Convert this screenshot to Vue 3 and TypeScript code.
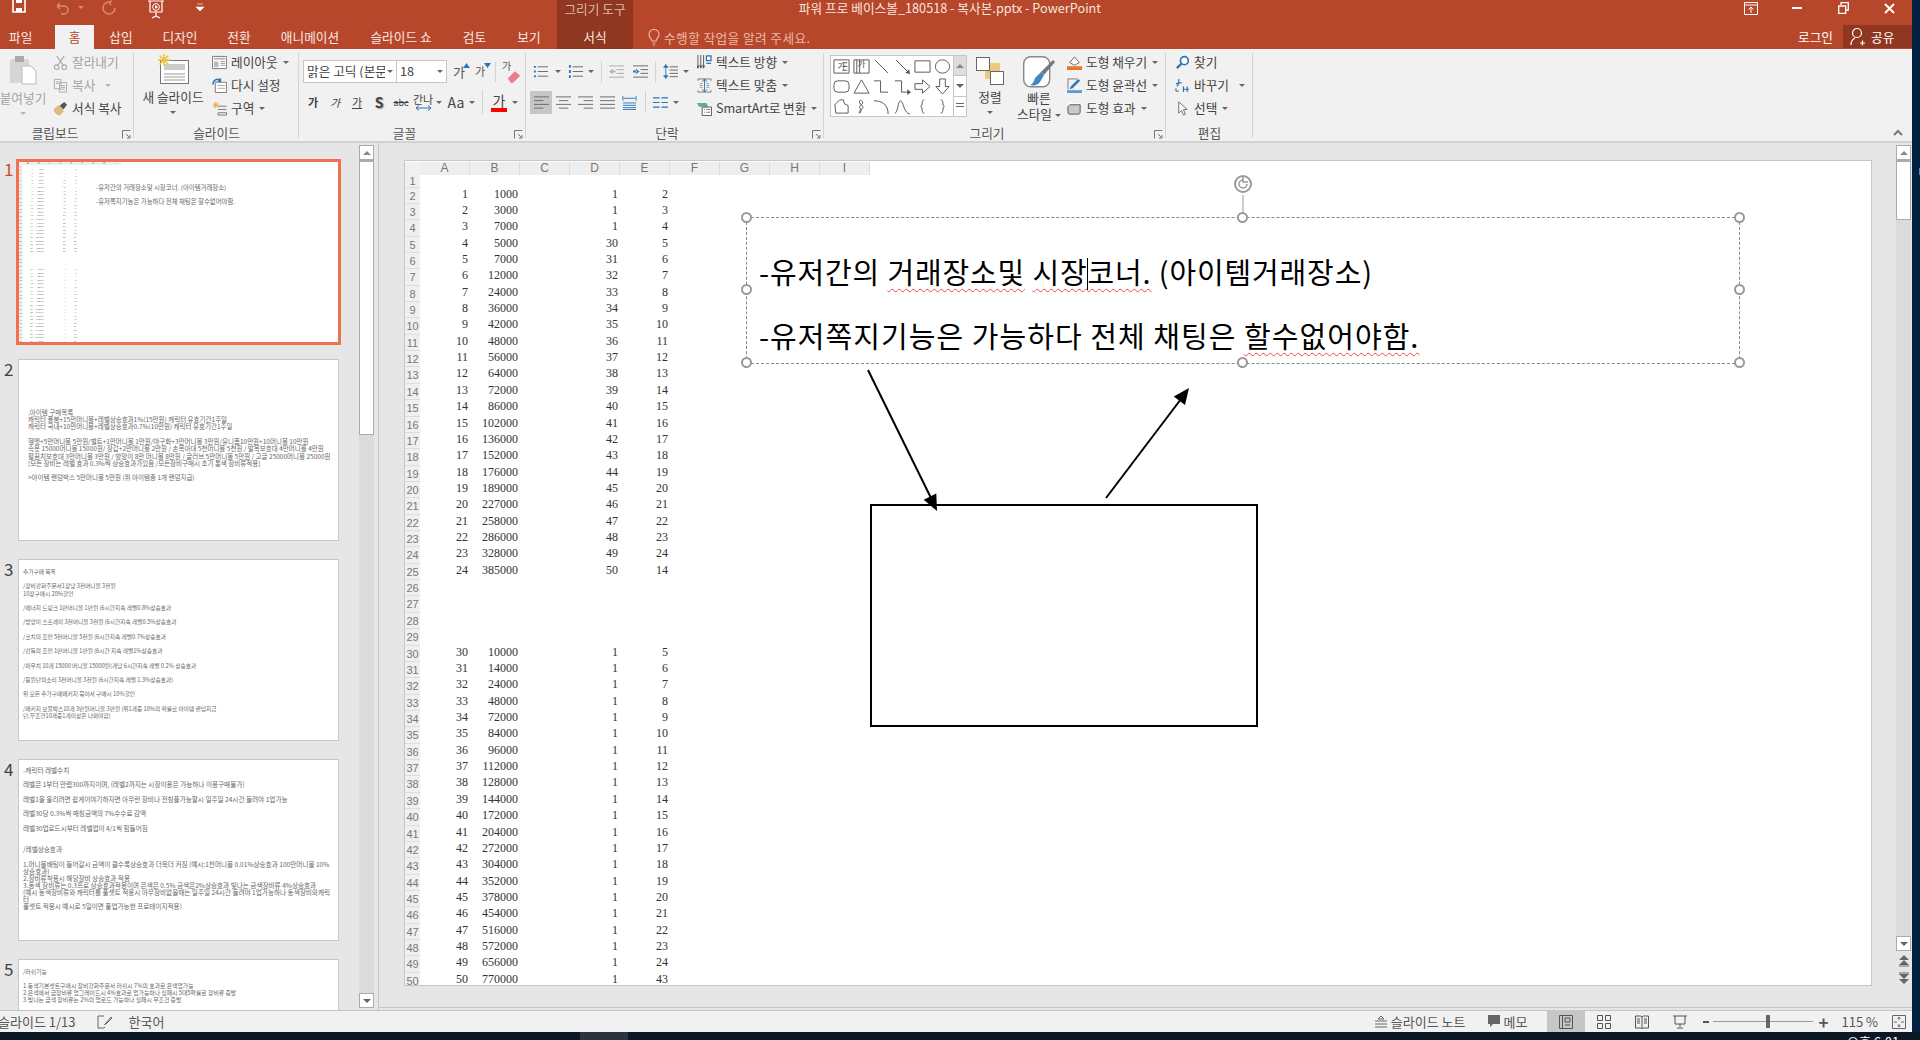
<template>
  <div class="screen">
    <div class="desktop-row">
      <div class="window">
        <!-- title bar -->
        <header class="titlebar">
          <div class="title-row">
            <div class="qat">
              <svg class="qat-save" width="14" height="14" viewBox="0 0 14 14"><path d="M1 -3h12v15H1z" fill="none" stroke="#fff" stroke-width="1.6" /><path d="M4 -2h6v5H4zM4 8h6v4H4z" fill="#fff" /></svg>
              <svg class="qat-undo" width="16" height="16" viewBox="0 0 16 16"><path d="M3 6h7a4 4 0 0 1 0 8H7M3 6l3-3M3 6l3 3" fill="none" stroke="#d98a72" stroke-width="1.5" /></svg>
              <span class="caret pale qat-caret"></span>
              <svg class="qat-redo" width="16" height="16" viewBox="0 0 16 16"><path d="M8 2a6 6 0 1 0 6 6M8 2l3-1M8 2l2 3" fill="none" stroke="#d98a72" stroke-width="1.5" /></svg>
              <svg class="qat-show" width="18" height="20" viewBox="0 0 18 20"><path d="M1 1h16M3 1v11h12V1M9 12v4M5 18l4-2 4 2" fill="none" stroke="#fff" stroke-width="1.2" /><circle cx="9" cy="7" r="3.4" fill="none" stroke="#fff" /><path d="M8 5l3 2-3 2z" fill="#fff" /></svg>
              <svg class="qat-more" width="8" height="10" viewBox="0 0 8 10"><path d="M1 1h6M0 4h8l-4 4z" fill="#fff" stroke="#fff" stroke-width=".6" /></svg>
            </div>
            <div class="tools-label">그리기 도구</div>
            <div class="doc-title">파워 프로 베이스볼_180518 - 복사본.pptx - PowerPoint</div>
            <div class="win-btns">
              <span class="win-btn"><svg width="14" height="13" viewBox="0 0 14 13"><path d="M.5.5h13v12H.5zM.5 3h13M7 11V5M4.5 7.5L7 5l2.5 2.5" fill="none" stroke="#fff" /></svg></span>
              <span class="win-btn"><svg width="10" height="10" viewBox="0 0 10 10"><path d="M0 5h10" stroke="#fff" stroke-width="2" /></svg></span>
              <span class="win-btn"><svg width="11" height="12" viewBox="0 0 11 12"><path d="M3 3V.7h7.3V8H8M.7 4h7v7.3h-7z" fill="none" stroke="#fff" stroke-width="1.3" /></svg></span>
              <span class="win-btn"><svg width="11" height="11" viewBox="0 0 11 11"><path d="M1 1l9 9M10 1l-9 9" stroke="#fff" stroke-width="2" /></svg></span>
            </div>
          </div>
          <div class="tab-row">
            <div
              v-for="t in tabs"
              :key="t.name"
              class="tab"
              :class="{ active: t.name === '홈', tool: t.name === '서식', file: t.name === '파일' }"
              :style="{ width: t.w + 'px' }"
            >{{ t.name }}</div>
            <div class="tell-me">
              <svg width="12" height="17" viewBox="0 0 12 17"><path d="M4 12c0-2-3-3-3-6.500a5 5 0 0 1 10 0C11 9 8 10 8 12zM4.500 14h3M5 16h2" fill="none" stroke="#eab9a8" stroke-width="1.100" /></svg>
              <span>수행할 작업을 알려 주세요.</span>
            </div>
            <div class="login">로그인</div>
            <div class="share">
              <svg width="16" height="19" viewBox="0 0 16 19"><circle cx="7" cy="6" r="4.500" fill="none" stroke="#fff" stroke-width="1.200" /><path d="M1 18c0-4 2-6 4-7M10 16h5M12.500 13.500v5" fill="none" stroke="#fff" stroke-width="1.200" /></svg>
              <span>공유</span>
            </div>
          </div>
        </header>

        <!-- ribbon -->
        <section class="ribbon">
          <div class="group g-clip">
            <div class="group-body">
              <div class="big-btn paste disabled">
                <svg width="30" height="30" viewBox="0 0 30 30"><rect x="2" y="4" width="19" height="24" rx="1.500" fill="#d9d5d5" /><rect x="7" y="1" width="9" height="6" fill="#aaa" /><path d="M14 11h9l5 5v13H14z" fill="#fff" stroke="#bbb" /></svg>
                <span class="big-label">붙여넣기</span>
                <span class="caret pale-gray"></span>
              </div>
              <div class="small-col">
                <div class="small-btn disabled"><svg class="ic" viewBox="0 0 16 16"><path d="M4 1l7 10M12 1L5 11" stroke="#aaa" fill="none" stroke-width="1.200" /><circle cx="4" cy="13" r="2.500" fill="none" stroke="#aaa" stroke-width="1.200" /><circle cx="12" cy="13" r="2.500" fill="none" stroke="#aaa" stroke-width="1.200" /></svg>잘라내기</div>
                <div class="small-btn disabled"><svg class="ic" viewBox="0 0 16 16"><path d="M1.500 1.500h7v10h-7zM7 5h7.500v10H7zM3 4h4M3 6h3M9 8h4M9 10h4M9 12h4" fill="#f4f4f4" stroke="#aaa" /></svg>복사<span class="caret pale-gray far"></span></div>
                <div class="small-btn"><svg class="ic" viewBox="0 0 16 16"><path d="M1 9l5-4 5 6-4 4-4-2z" fill="#e2bb78" stroke="#c39a55" stroke-width=".6" /><path d="M7 5l5-4 3 3-4 5z" fill="#555" /></svg>서식 복사</div>
              </div>
            </div>
            <div class="group-label">클립보드</div>
            <svg class="launcher" width="9" height="9" viewBox="0 0 9 9"><path d="M.5 8.500v-8h8M4 4l4 4M5 8h3V5" fill="none" stroke="#777" /></svg>
          </div>

          <div class="group g-slide">
            <div class="group-body">
              <div class="big-btn new-slide">
                <svg width="32" height="30" viewBox="0 0 32 30"><rect x="3.500" y="6.500" width="28" height="23" fill="#fff" stroke="#777" /><rect x="7" y="10" width="21" height="6" fill="#ccc" /><path d="M7 20h21M7 23h21M7 26h21" stroke="#999" /><path d="M7 0v12M1 6h12M2.500 1.500l9 9M11.500 1.500l-9 9" stroke="#f0c040" stroke-width="1.500" /></svg>
                <span class="big-label">새 슬라이드</span>
                <span class="caret"></span>
              </div>
              <div class="small-col">
                <div class="small-btn"><svg class="ic" viewBox="0 0 16 16"><path d="M.5 1.500h15v13H.5z" fill="#fff" stroke="#777" /><path d="M2 3h12v2H2zM2 7h5v6H2z" fill="#bbb" /><path d="M9 7h5M9 9h5M9 11h5" stroke="#999" /></svg>레이아웃<span class="caret"></span></div>
                <div class="small-btn"><svg class="ic" viewBox="0 0 16 16"><path d="M3.500 4.500h12v11h-12z" fill="#fff" stroke="#777" /><path d="M6 8h8M6 11h8" stroke="#aaa" /><path d="M1 7a5 5 0 0 1 8-4.500M9 .5v3H6" fill="none" stroke="#2e75b6" stroke-width="1.600" /></svg>다시 설정</div>
                <div class="small-btn"><svg class="ic" viewBox="0 0 16 16"><path d="M6.500 5.500h9M6.500 9h9M6.500 12.500h9V15h-9z" fill="none" stroke="#777" /><path d="M4 1v7M.5 4.500h7M1.500 2l5 5M6.500 2l-5 5" stroke="#eaa12f" /></svg>구역<span class="caret"></span></div>
              </div>
            </div>
            <div class="group-label">슬라이드</div>
          </div>

          <div class="group g-font">
            <div class="font-rows">
              <div class="font-row first">
                <div class="combo name"><span class="combo-text">맑은 고딕 (본문)</span><span class="caret"></span></div>
                <div class="combo size"><span class="combo-text">18</span><span class="caret"></span></div>
                <div class="grow"><span class="glyph big">가</span><svg width="7" height="5" viewBox="0 0 7 5"><path d="M3.500 0L7 5H0z" fill="#2e75b6" /></svg></div>
                <div class="grow small"><span class="glyph">가</span><svg width="7" height="5" viewBox="0 0 7 5"><path d="M3.500 5L7 0H0z" fill="#2e75b6" /></svg></div>
                <span class="vsep"></span>
                <div class="eraser"><span class="glyph tiny">가</span><svg width="14" height="13" viewBox="0 0 16 14"><path d="M1 9l8-8 6 5-8 8H4z" fill="#e87d8e" /></svg></div>
              </div>
              <div class="font-row second">
                <span class="fmt bold">가</span>
                <span class="fmt italic">가</span>
                <span class="fmt under">가</span>
                <span class="fmt shadow">S</span>
                <span class="fmt strike">abc</span>
                <span class="fmt spacing">간나<svg width="17" height="6" viewBox="0 0 17 6"><path d="M1 3h15M4 .5L1 3l3 2.500M13 .5L16 3l-3 2.500" fill="none" stroke="#2e75b6" /></svg></span>
                <span class="caret near"></span>
                <span class="fmt aa">Aa</span>
                <span class="caret near"></span>
                <span class="vsep tall"></span>
                <span class="fmt color">가<i class="red-bar"></i></span>
                <span class="caret"></span>
              </div>
            </div>
            <div class="group-label">글꼴</div>
            <svg class="launcher" width="9" height="9" viewBox="0 0 9 9"><path d="M.5 8.500v-8h8M4 4l4 4M5 8h3V5" fill="none" stroke="#777" /></svg>
          </div>

          <div class="group g-para">
            <div class="group-body">
              <div class="para-left">
                <div class="para-row top">
                  <svg class="ic wide" viewBox="0 0 16 16"><path d="M5 3h11M5 8h11M5 13h11" stroke="#666" /><path d="M1 2h2v2H1zM1 7h2v2H1zM1 12h2v2H1z" fill="#2e75b6" /></svg><span class="caret c8"></span>
                  <svg class="ic wide gap" viewBox="0 0 16 16"><path d="M5 3h11M5 8h11M5 13h11" stroke="#666" /><path d="M1 1h2v3H1zM1 6.500h2v3H1zM1 12h2v3H1z" fill="#2e75b6" /></svg><span class="caret"></span>
                  <span class="vsep mid"></span>
                  <svg class="ic wide" viewBox="0 0 16 16"><path d="M0 2h16M8 6h8M8 10h8M0 14h16" stroke="#aaa" /><path d="M0 8l4-3v6zM3 7h4v2H3z" fill="#9db7cd" /></svg>
                  <svg class="ic wide gap2" viewBox="0 0 16 16"><path d="M0 2h16M8 6h8M8 10h8M0 14h16" stroke="#666" /><path d="M7 8L3 5v6zM0 7h4v2H0z" fill="#2e75b6" /></svg>
                  <span class="vsep mid"></span>
                  <svg class="ic wide" viewBox="0 0 16 16"><path d="M7 3h9M7 6.500h9M7 10h9M7 13.500h9" stroke="#666" /><path d="M3 0l3 4H0zM3 16l3-4H0zM2.500 4h1v8h-1z" fill="#2e75b6" /></svg><span class="caret"></span>
                </div>
                <div class="para-row bottom">
                  <span class="align on"><svg class="ic" viewBox="0 0 16 16"><path d="M0 2h16M0 6h10M0 10h16M0 14h10" stroke="#666" /></svg></span>
                  <span class="align"><svg class="ic" viewBox="0 0 16 16"><path d="M0 2h16M3 6h10M0 10h16M3 14h10" stroke="#666" /></svg></span>
                  <span class="align"><svg class="ic" viewBox="0 0 16 16"><path d="M0 2h16M6 6h10M0 10h16M6 14h10" stroke="#666" /></svg></span>
                  <span class="align"><svg class="ic" viewBox="0 0 16 16"><path d="M0 2h16M0 6h16M0 10h16M0 14h16" stroke="#666" /></svg></span>
                  <span class="align"><svg class="ic" viewBox="0 0 16 16"><path d="M1 1v5M15 1v5M2 3.500h12M1 8.500h14M1 11h14M1 13.500h14M1 15.500h14" stroke="#2e75b6" /></svg></span>
                  <span class="vsep mid before-cols"></span>
                  <svg class="ic wide" viewBox="0 0 16 16"><path d="M0 3h7M9 3h7M0 8h7M9 8h7M0 13h7M9 13h7" stroke="#2e75b6" stroke-width="1.300" /></svg><span class="caret"></span>
                </div>
              </div>
              <div class="small-col para-small">
                <div class="small-btn"><svg class="ic" viewBox="0 0 16 16"><path d="M1 0v14M4 0v14M7 0v14M0 11l1 3 1-3M3 11l1 3 1-3M6 11l1 3 1-3" fill="none" stroke="#555" /><path d="M10 1h5v5h-5zM10 9h5" fill="none" stroke="#2e75b6" stroke-width="1.300" /></svg>텍스트 방향<span class="caret"></span></div>
                <div class="small-btn"><svg class="ic" viewBox="0 0 16 16"><path d="M1 3V1h14v2M1 13v2h14v-2" fill="none" stroke="#777" /><path d="M8 1v14M5.500 4L8 1l2.500 3M5.500 12L8 15l2.500-3" fill="none" stroke="#2e75b6" /><path d="M3 6h3M3 8h3M3 10h3M10 6h3M10 8h3M10 10h3" stroke="#999" /></svg>텍스트 맞춤<span class="caret"></span></div>
                <div class="small-btn smart"><svg class="ic" viewBox="0 0 16 16"><path d="M0 2h10l2 4H2z" fill="#5fae8f" /><path d="M5.500 6.500h10v9h-10z" fill="#fff" stroke="#555" /><path d="M7.500 9h1M7.500 12h1M10 9h4M10 12h4" stroke="#777" /></svg>SmartArt로 변환<span class="caret"></span></div>
              </div>
            </div>
            <div class="group-label">단락</div>
            <svg class="launcher" width="9" height="9" viewBox="0 0 9 9"><path d="M.5 8.500v-8h8M4 4l4 4M5 8h3V5" fill="none" stroke="#777" /></svg>
          </div>

          <div class="group g-draw">
            <div class="group-body">
              <div class="gallery">
                <div class="gallery-grid">
                  <svg v-for="(s, i) in shapes" :key="i" class="shape" viewBox="0 0 18 18">
                    <path :d="s.d" fill="none" stroke="#555" />
                    <path v-if="s.head" :d="s.head" fill="#555" />
                    <text v-if="s.t" x="9" :y="s.ty" class="shape-text" text-anchor="middle">{{ s.t }}</text>
                  </svg>
                </div>
                <div class="gallery-scroll">
                  <span class="gs-btn off"><i class="tri up"></i></span>
                  <span class="gs-btn"><i class="tri down"></i></span>
                  <span class="gs-btn"><i class="tri-more"></i></span>
                </div>
              </div>
              <div class="big-btn arrange">
                <svg width="28" height="28" viewBox="0 0 28 28"><rect x="9" y="6" width="15" height="16" fill="#edc87e" /><rect x=".5" y=".5" width="13" height="13" fill="#fff" stroke="#666" /><rect x="14.500" y="14.500" width="13" height="13" fill="#fff" stroke="#666" /></svg>
                <span class="big-label">정렬</span>
                <span class="caret"></span>
              </div>
              <div class="big-btn quick">
                <svg width="32" height="32" viewBox="0 0 32 32"><rect x=".7" y=".7" width="26" height="30" rx="7" fill="#fff" stroke="#888" stroke-width="1.400" /><path d="M18 16L30 4l2 2-11 13z" fill="#777" /><path d="M12 22l6-6 3 3-4 7c-2 3-6 4-10 3 3-1 4-4 5-7z" fill="#3f87c6" /></svg>
                <span class="big-label">빠른</span>
                <span class="big-label second-line">스타일<span class="caret inline"></span></span>
              </div>
              <div class="small-col shape-col">
                <div class="small-btn"><svg class="ic" viewBox="0 0 16 16"><path d="M3 8l5-6 5 6-5 3z" fill="#fff" stroke="#666" /><path d="M0 12h16v4H0z" fill="#e9772b" /></svg>도형 채우기<span class="caret"></span></div>
                <div class="small-btn"><svg class="ic" viewBox="0 0 16 16"><path d="M1 1h10M1 1v11" stroke="#777" fill="none" /><path d="M4 9l8-8 2 2-8 8-3 1z" fill="#2e75b6" /><path d="M0 13h16v3H0z" fill="#5b9bd5" /></svg>도형 윤곽선<span class="caret"></span></div>
                <div class="small-btn"><svg class="ic" viewBox="0 0 16 16"><path d="M1 12V5a3 3 0 0 1 3-3h9z" fill="#fff" /><path d="M3 4h11v8a2 2 0 0 1-2 2H3a2 2 0 0 1-2-2V6z" fill="#c9c9c9" stroke="#555" /></svg>도형 효과<span class="caret"></span></div>
              </div>
            </div>
            <div class="group-label">그리기</div>
            <svg class="launcher" width="9" height="9" viewBox="0 0 9 9"><path d="M.5 8.500v-8h8M4 4l4 4M5 8h3V5" fill="none" stroke="#777" /></svg>
          </div>

          <div class="group g-edit">
            <div class="small-col edit-col">
              <div class="small-btn"><svg class="ic" viewBox="0 0 16 16"><circle cx="10" cy="6" r="4.200" fill="#fff" stroke="#2e75b6" stroke-width="1.800" /><path d="M7 9l-5 5" stroke="#2e75b6" stroke-width="2.400" /></svg>찾기</div>
              <div class="small-btn"><svg class="ic" viewBox="0 0 16 16"><path d="M1 6l6-1M4 1v5M2 9l2-3M9 9v6M9 12h6M13 9v6" fill="none" stroke="#2e75b6" stroke-width="1.300" /><path d="M1 11v3h3" fill="none" stroke="#555" /></svg>바꾸기<span class="caret far"></span></div>
              <div class="small-btn"><svg class="ic" viewBox="0 0 16 16"><path d="M4 1v12l3-3 2 5 2-1-2-5h4z" fill="#fff" stroke="#666" /></svg>선택<span class="caret"></span></div>
            </div>
            <div class="group-label">편집</div>
          </div>
          <svg class="collapse" width="10" height="7" viewBox="0 0 10 7"><path d="M1 6l4-4 4 4" fill="none" stroke="#777" stroke-width="2" /></svg>
        </section>

        <!-- workspace -->
        <main class="workspace">
          <aside class="thumbs">
            <div class="thumb-list">
              <div class="thumb-item">
                <span class="thumb-no current">1</span>
                <div class="thumb sel">
                  <div class="mini-sheet">
                    <div class="sheet-head"><span class="corner"></span><span v-for="c in letters" :key="c" class="col-head">{{ c }}</span></div>
                    <div v-for="r in rows" :key="r.n" class="sheet-row" :class="{ firstrow: r.n === 1 }">
                      <span class="row-head">{{ r.n }}</span>
                      <span class="cell">{{ r.v[0] }}</span><span class="cell">{{ r.v[1] }}</span><span class="cell"></span>
                      <span class="cell">{{ r.v[2] }}</span><span class="cell">{{ r.v[3] }}</span>
                    </div>
                  </div>
                  <div class="mini-text">
                    <p>-유저간의 거래장소및 시장코너. (아이템거래장소)</p>
                    <p>-유저쪽지기능은 가능하다 전체 채팅은 할수없어야함.</p>
                  </div>
                </div>
              </div>
              <div v-for="t in thumbTexts" :key="t.n" class="thumb-item">
                <span class="thumb-no">{{ t.n }}</span>
                <div class="thumb" :class="'t' + t.n">
                  <p v-for="(line, i) in t.lines" :key="i">{{ line }}</p>
                </div>
              </div>
            </div>
            <div class="scrollbar left-scroll">
              <span class="sb-btn"><i class="tri up"></i></span>
              <span class="sb-thumb"></span>
              <span class="sb-track"></span>
              <span class="sb-btn"><i class="tri down"></i></span>
            </div>
          </aside>

          <div class="editor">
            <div class="slide">
              <div class="sheet">
                <div class="sheet-head"><span class="corner"></span><span v-for="c in letters" :key="c" class="col-head">{{ c }}</span></div>
                <div v-for="r in rows" :key="r.n" class="sheet-row" :class="{ firstrow: r.n === 1 }">
                  <span class="row-head">{{ r.n }}</span>
                  <span class="cell">{{ r.v[0] }}</span><span class="cell">{{ r.v[1] }}</span><span class="cell"></span>
                  <span class="cell">{{ r.v[2] }}</span><span class="cell">{{ r.v[3] }}</span>
                </div>
              </div>

              <svg class="drawing" viewBox="405 161 1466 824">
                <rect x="871" y="505" width="386" height="221" fill="#fff" stroke="#000" stroke-width="2" />
                <path d="M868 370L931 498" stroke="#000" stroke-width="2" />
                <polygon points="937,511 923.700,499.700 936.300,493.500" fill="#000" />
                <path d="M1106 498L1181 399" stroke="#000" stroke-width="2" />
                <polygon points="1189,388 1185,405 1173.800,396.600" fill="#000" />
                <path d="M1243 195v22" stroke="#999" />
                <circle cx="1243" cy="184" r="8" fill="none" stroke="#999" stroke-width="2" />
                <path d="M1243 180a4 4 0 1 0 4 4M1243 176v6h5" fill="none" stroke="#999" stroke-width="1.500" />
              </svg>

              <div class="textbox">
                <p class="tb-line">-유저간의 <span class="typo">거래장소및</span> <span class="typo">시장<i class="text-cursor"></i>코너.</span> (아이템거래장소)</p>
                <p class="tb-line second">-유저쪽지기능은 가능하다 전체 채팅은 <span class="typo">할수없어야함.</span></p>
                <span v-for="h in handles" :key="h.k" class="handle" :class="h.k"></span>
              </div>
            </div>
            <div class="scrollbar main-scroll">
              <span class="sb-btn"><i class="tri up"></i></span>
              <span class="sb-thumb"></span>
              <span class="sb-track"></span>
              <span class="sb-btn"><i class="tri down"></i></span>
              <svg class="page-arrow prev" width="10" height="12" viewBox="0 0 10 12"><path d="M5 0l5 5H0zM5 5l5 5H0z" fill="#666" /><path d="M0 11h10" stroke="#666" /></svg>
              <svg class="page-arrow next" width="10" height="12" viewBox="0 0 10 12"><path d="M0 1h10" stroke="#666" /><path d="M0 2h10L5 7zM0 7h10l-5 5z" fill="#666" /></svg>
            </div>
          </div>
        </main>

        <!-- status bar -->
        <footer class="statusbar">
          <span class="st-count">슬라이드 1/13</span>
          <svg class="st-book" width="15" height="14" viewBox="0 0 15 14"><path d="M7 1H1v12h6l1-1M9 8l5-6 1 1-6 6-1.500.5z" fill="none" stroke="#666" /></svg>
          <span class="st-lang">한국어</span>
          <div class="st-right">
            <span class="st-item"><svg width="12" height="12" viewBox="0 0 12 12"><path d="M6 0L3 3h6zM0 5h12M0 8h12M0 11h12" stroke="#666" fill="none" /></svg>슬라이드 노트</span>
            <span class="st-item memo"><svg width="12" height="13" viewBox="0 0 12 13"><path d="M0 0h12v9H5l-3 3V9H0z" fill="#666" /></svg>메모</span>
            <span class="view on"><svg width="14" height="14" viewBox="0 0 14 14"><path d="M.5.5h13v13H.5zM3.500.5v13M6 3h5v4H6zM6 10h5" fill="none" stroke="#555" /></svg></span>
            <span class="view"><svg width="14" height="14" viewBox="0 0 14 14"><path d="M.5.5h5v5h-5zM8.500.5h5v5h-5zM.5 8.500h5v5h-5zM8.500 8.500h5v5h-5z" fill="none" stroke="#555" /></svg></span>
            <span class="view"><svg width="14" height="14" viewBox="0 0 14 14"><path d="M.5 1h5l1.500 1 1.500-1h5v12h-5L7 14l-1.500-1h-5zM7 2v12M2 4h3M2 6h3M2 8h3M9 4h3M9 6h3M9 8h3" fill="none" stroke="#555" /></svg></span>
            <span class="view"><svg width="14" height="14" viewBox="0 0 14 14"><path d="M0 1h14M2 1v8h10V1M7 9v3M4 13h6" fill="none" stroke="#555" /></svg></span>
            <span class="zoom-minus"></span>
            <span class="zoom-track"><i class="zoom-knob"></i></span>
            <span class="zoom-plus">+</span>
            <span class="zoom-val">115 %</span>
            <svg class="fit" width="14" height="14" viewBox="0 0 14 14"><path d="M.5.5h13v13H.5zM7 2v3M5.500 3.500L7 2l1.500 1.500M7 12V9M5.500 10.500L7 12l1.500-1.500M2 7h3M9 7h3" fill="none" stroke="#666" /></svg>
          </div>
        </footer>
      </div>
      <div class="desk-strip"><i class="desk-dot"></i></div>
    </div>
    <div class="taskbar">
      <span class="task-active"></span>
      <span class="clock">오후 6:01</span>
    </div>
  </div>
</template>

<script setup lang="ts">
const tabs = [
  { name: '파일', w: 55 },
  { name: '홈', w: 39 },
  { name: '삽입', w: 54 },
  { name: '디자인', w: 64 },
  { name: '전환', w: 54 },
  { name: '애니메이션', w: 88 },
  { name: '슬라이드 쇼', w: 94 },
  { name: '검토', w: 53 },
  { name: '보기', w: 56 },
  { name: '서식', w: 76 },
]

const letters = ['A', 'B', 'C', 'D', 'E', 'F', 'G', 'H', 'I']

const top = [1000, 3000, 7000, 5000, 7000, 12000, 24000, 36000, 42000, 48000, 56000, 64000, 72000, 86000, 102000, 136000, 152000, 176000, 189000, 227000, 258000, 286000, 328000, 385000]
const topD = [1, 1, 1, 30, 31, 32, 33, 34, 35, 36, 37, 38, 39, 40, 41, 42, 43, 44, 45, 46, 47, 48, 49, 50]
const bottom = [10000, 14000, 24000, 48000, 72000, 84000, 96000, 112000, 128000, 144000, 172000, 204000, 272000, 304000, 352000, 378000, 454000, 516000, 572000, 656000, 770000]

const rows: { n: number; v: (number | string)[] }[] = []
for (let n = 1; n <= 50; n++) {
  if (n >= 2 && n <= 25) {
    const i = n - 2
    rows.push({ n, v: [n - 1, top[i], topD[i], n === 25 ? 14 : n] })
  } else if (n >= 30) {
    const i = n - 30
    rows.push({ n, v: [n, bottom[i], 1, n === 50 ? 43 : n - 25] })
  } else {
    rows.push({ n, v: ['', '', '', ''] })
  }
}

const shapes: { d: string; head?: string; t?: string; ty?: number }[] = [
  { d: 'M1 2h16v14H1zM10 5h5M10 9h5M10 13h5', t: '가', ty: 12 },
  { d: 'M1 2h16v14H1zM4 2v14M7 2v14', t: '가', ty: 9 },
  { d: 'M2 2l14 14' },
  { d: 'M2 2l14 14', head: 'M17 17l-5-1 4-4z' },
  { d: 'M1 3h16v12H1z' },
  { d: 'M9 2a7.500 7 0 1 0 .01 0z' },
  { d: 'M5 3h8a4 4 0 0 1 4 4v4a4 4 0 0 1-4 4H5a4 4 0 0 1-4-4V7a4 4 0 0 1 4-4z' },
  { d: 'M9 2l8 14H1z' },
  { d: 'M1 3h7v12h8' },
  { d: 'M1 3h7v12h8', head: 'M18 15l-4-3v6z' },
  { d: 'M1 6h8V2l8 7-8 7v-4H1z' },
  { d: 'M6 1h6v8h4l-7 8-7-8h4z' },
  { d: 'M3 16l-1-9 5-5h4l1 4 4 2v8z' },
  { d: 'M6 16c7-3-3-6 3-9 3-2 0-6-2-4-2 3 7 6 2 9-2 1-3 3-1 4' },
  { d: 'M1 3c9 0 15 4 15 14' },
  { d: 'M1 16C4 16 4 3 7 3s3 13 10 14' },
  { d: 'M11 2c-4 0-1 6-4 7 3 1 0 7 4 7' },
  { d: 'M7 2c4 0 1 6 4 7-3 1 0 7-4 7' },
]

const handles = ['tl', 'tc', 'tr', 'ml', 'mr', 'bl', 'bc', 'br'].map((k) => ({ k }))

const thumbTexts = [
  {
    n: 2,
    lines: [
      '.아이템 구매목록\n캐릭터 풍붕+15만머니볼+레벨상승효과1%(15만원) 캐릭터 유효기간1주일\n캐릭터 국내+10만머니볼+레벨상승효과0.7%(10만원) 캐릭터 유효기간1주일',
      '헬멧+5만머니볼 5만원/벨트+1만머니볼 1만원/야구화+3만머니볼 3만원/유니폼10만원+10머니볼 10만원\n속옷 15000머니볼 15000원/ 장갑+2만머니볼 2만원 / 손목아대 5천머니볼 5천원 / 발목보호대 4만머니볼 4만원\n팔꿈치보호대 3만머니볼 3만원 / 방망이 8만 머니볼 8만원 / 글러브 5만머니볼 5만원 / 고글 25000머니볼 25000원\n[모든 장비는 레벨 효과 0.3%씩 상승효과가있음 /모든장비구매시 초기 통색 장비류적용]',
      '>아이템 랜덤박스 5만머니볼 5만원  (위 아이템중 1개 랜덤지급)',
    ],
  },
  {
    n: 3,
    lines: [
      '추가구매 목록',
      '/장비강화주문서1장당 3천머니볼 3천원\n10장구매시 20%할인',
      '/에너지 드링크 1만머니볼  1만원 (6시간지속 레벨0.8%상승효과',
      '/방망이 스프레이 3천머니볼 3천원 (6시간지속 레벨0.5%상승효과',
      '/코치의 조언 5천머니볼 5천원  (6시간지속 레벨0.7%상승효과',
      '/감독의 조언 1만머니볼 1만원 (6시간 지속 레벨1%상승효과',
      '/파우치 10개 15000 머니볼 15000원(개당 6시간지속 레벨 0.2% 상승효과',
      '/응원단의소리 3천머니볼 3천원 (6시간지속 레벨 1.3%상승효과)',
      '위 모든 추가구매패키지 묶어서 구매시 10%할인',
      '/패키지 보물박스10개 3만원머니볼 3만원 (위1개중 10%의 확률로 아이템 랜덤지급\n단,무조건10개중1개이상은 나와야함)',
    ],
  },
  {
    n: 4,
    lines: [
      '-캐릭터 레벨수치',
      '레벨은 1부터 만렙300까지이며,  (레벨2까지는 시장이용은 가능하나 이용구매불가)',
      '레벨1을 올리려면 쉽게이야기하자면 아무런 장비나 전칭플가능할시  일주일 24시간 돌려야 1업가능',
      '레벨30당 0.3%씩 매칭금액의 7%수수료 감액',
      '레벨30업로드시부터 레벨업이 4/1씩 힘들어짐',
      '\n/레벨상승효과',
      '1.머니볼배팅이 들어갈시 금액이 클수록상승효과 더욱더 커짐 (예시:1천머니볼 0.01%상승효과  100만머니볼 10%상승효과)\n2.장비류착용시 해당장비 상승효과 적용\n3.동색 장비류는 0.3프로 상승효과적용이며 은색은 0.5% 금색은2%상승효과 빛나는 금색장비류 4%상승효과\n(예시 동색장비류와 캐릭터를 풀셋트 적용시  아무장비없을때는 일주일 24시간 돌려야 1업가능하나 동색장비와캐릭터\n풀셋트 적용시 예시로 5일이면 풀업가능한 프로테이지적용)',
    ],
  },
  {
    n: 5,
    lines: [
      '/러쉬기능',
      '1.동색기본셋트구매시 장비강화주문서 러쉬시 7%의 효과로 은색업가능\n2.은색에서 금장비류 업그레이드시 4%효과로 업가능하나 실패시 5대5확률로 장비류 증발\n3.빛나는 금색 장비류는 2%의 업로드 가능하나 실패시 무조건 증발',
    ],
  },
]
</script>

<style>
html, body {
  margin: 0;
  height: 100%;
  overflow: hidden;
  background: #02203f;
}
</style>

<style scoped>
.screen {
  width: 1920px;
  height: 1040px;
  display: flex;
  flex-direction: column;
  overflow: hidden;
  font-family: "Noto Sans CJK KR", "Liberation Sans", sans-serif;
  font-size: 12.7px;
  color: #444;
}
.desktop-row { display: flex; height: 1032px; }
.window { width: 1912px; display: flex; flex-direction: column; background: #e6e6e6; }
.desk-strip { flex: 1; background: #02203f; position: relative; }
.desk-dot { position: absolute; right: 0; top: 168px; width: 1px; height: 7px; background: #3d8fd8; }
.taskbar { height: 8px; background: #0c1724; position: relative; overflow: hidden; color: #fff; }
.task-active { position: absolute; left: 580px; top: 0; width: 48px; height: 8px; background: #2b333c; }
.clock { position: absolute; left: 1847px; top: 1px; font-size: 13px; line-height: 18px; }

/* title bar */
.titlebar { background: #b7472a; color: #fff; height: 49px; flex: none; }
.title-row { display: flex; height: 25px; }
.qat { width: 557px; position: relative; flex: none; }
.qat svg, .qat .caret { position: absolute; }
.qat-save { left: 12px; top: 0; }
.qat-undo { left: 54px; top: 0; }
.qat-caret { left: 78px; top: 6px; }
.qat-redo { left: 101px; top: 0; }
.qat-show { left: 147px; top: 0; }
.qat-more { left: 196px; top: 3px; }
.tools-label { width: 76px; flex: none; background: #8f3720; color: #ddb7aa; text-align: center; line-height: 18px; }
.doc-title { width: 634px; flex: none; text-align: center; line-height: 16px; color: #f6e5df; }
.win-btns { flex: 1; display: flex; justify-content: flex-end; }
.win-btn { width: 46px; height: 16px; display: flex; align-items: center; justify-content: center; }
.tab-row { display: flex; height: 24px; align-items: stretch; }
.tab { flex: none; text-align: center; line-height: 24px; color: #f8e9e4; }
.tab.file { text-align: left; padding-left: 9px; box-sizing: border-box; }
.tab.active { background: #f1f1f1; color: #b7472a; }
.tab.tool { background: #8f3720; }
.tell-me { display: flex; align-items: center; gap: 4px; margin-left: 15px; color: #eab9a8; letter-spacing: .4px; }
.login { margin-left: auto; margin-right: 10px; line-height: 24px; }
.share { width: 69px; margin-bottom: 1px; background: #8f3720; display: flex; align-items: center; gap: 5px; padding-left: 7px; box-sizing: border-box; }

/* ribbon */
.ribbon { height: 92px; flex: none; display: flex; background: #f1f1f1; border-bottom: 2px solid #d2d2d2; position: relative; line-height: 1; }
.group { position: relative; display: flex; flex-direction: column; box-sizing: border-box; height: 92px; }
.group::after { content: ""; position: absolute; right: 0; top: 4px; bottom: 3px; width: 1px; background: #d3d3d3; }
.group-body { display: flex; flex: 1; min-height: 0; }
.group-label { position: absolute; left: 0; right: 0; top: 77px; text-align: center; line-height: 14px; color: #555; }
.g-clip .group-label { padding-right: 24px; }
.g-font .group-label, .g-para .group-label, .g-draw .group-label { padding-right: 16px; }
.launcher { position: absolute; right: 3px; top: 81px; }
.collapse { position: absolute; left: 1893px; top: 80px; }
.g-clip { width: 134px; }
.g-slide { width: 165px; }
.g-font { width: 227px; }
.g-para { width: 298px; }
.g-draw { width: 342px; }
.g-edit { width: 87px; }

.caret { display: inline-block; width: 0; height: 0; border-left: 3px solid transparent; border-right: 3px solid transparent; border-top: 3px solid #666; margin-left: 5px; flex: none; }
.caret.pale { border-top-color: #d98a72; margin: 0; }
.caret.pale-gray { border-top-color: #b5b5b5; }
.caret.far { margin-left: 10px; }
.caret.near { margin-left: 3px; }
.caret.c8 { margin-left: 7px; }
.caret.inline { vertical-align: middle; margin-left: 3px; }

.big-btn { display: flex; flex-direction: column; align-items: center; padding-top: 6px; box-sizing: border-box; flex: none; }
.big-label { margin-top: 6px; line-height: 14px; white-space: nowrap; }
.big-btn > .caret { margin: 7px 0 0; }
.second-line { margin-top: 2px; }
.disabled { color: #a3a3a3; }
.paste { width: 46px; }
.new-slide { width: 64px; margin-left: 7px; padding-top: 5px; }
.small-col { display: flex; flex-direction: column; padding-top: 2px; margin-left: 7px; }
.small-btn { height: 23px; display: flex; align-items: center; white-space: nowrap; }
.ic { width: 15px; height: 15px; flex: none; margin-right: 4px; }

/* font */
.font-rows { padding: 11px 0 0 4px; }
.font-row { display: flex; align-items: center; }
.font-row.first { height: 23px; }
.font-row.second { margin-top: 7px; height: 24px; }
.combo { height: 23px; box-sizing: border-box; background: #fff; border: 1px solid #c6c6c6; display: flex; align-items: center; padding: 0 3px; flex: none; }
.combo .caret { margin-left: 2px; }
.combo-text { flex: 1; min-width: 0; overflow: hidden; white-space: nowrap; }
.combo.name { width: 94px; }
.combo.size { width: 51px; margin-left: -1px; }
.grow { position: relative; display: flex; align-items: center; margin-left: 6px; width: 17px; height: 23px; flex: none; }
.grow svg { position: absolute; right: 0; top: 3px; }
.grow.small { width: 14px; margin-left: 5px; }
.grow.small svg { right: -2px; }
.glyph { font-size: 11px; color: #555; }
.glyph.big { font-size: 13px; }
.glyph.tiny { font-size: 10px; }
.vsep { width: 1px; height: 20px; background: #d3d3d3; margin: 0 6px; flex: none; }
.vsep.tall { height: 24px; margin: 0 8px 0 7px; }
.vsep.mid { height: 22px; margin: 0 7px; }
.vsep.before-cols { margin: 0 7px 0 5px; }
.eraser { position: relative; width: 19px; height: 22px; display: flex; align-items: flex-end; justify-content: flex-end; flex: none; }
.eraser .glyph { position: absolute; left: 0; top: 0; }
.fmt { width: 20px; margin-right: 2px; font-size: 11px; color: #444; display: inline-flex; flex-direction: column; align-items: center; flex: none; white-space: nowrap; }
.fmt.bold { font-weight: 700; }
.fmt.italic { font-style: italic; }
.fmt.under { text-decoration: underline; }
.fmt.shadow { font-weight: 700; font-size: 14px; text-shadow: 1px 1px 1px #999; }
.fmt.strike { font-size: 9px; text-decoration: line-through; }
.fmt.spacing { font-size: 11px; line-height: 12px; margin-right: 0; }
.fmt.aa { font-size: 14px; margin: 0 0 0 4px; }
.fmt.color { font-size: 14px; width: 16px; margin-right: 0; line-height: 14px; }
.red-bar { display: block; width: 16px; height: 4px; background: #f00; margin-top: 1px; }

/* paragraph */
.para-left { width: 168px; padding: 11px 0 0 4px; box-sizing: border-box; flex: none; }
.para-row { display: flex; align-items: center; height: 23px; }
.para-row.top { padding-left: 3px; }
.para-row.bottom { margin-top: 7px; height: 24px; }
.ic.wide { margin-right: 0; }
.ic.gap { margin-left: 7px; }
.ic.gap2 { margin-left: 9px; }
.align { width: 22px; height: 23px; display: flex; align-items: center; justify-content: center; flex: none; }
.align .ic { margin: 0; }
.align.on { background: #c6c6c6; }
.para-small { margin-left: 3px; }
.smart { letter-spacing: -.1px; }

/* drawing */
.gallery { margin: 6px 0 0 6px; width: 137px; height: 62px; box-sizing: border-box; border: 1px solid #c6c6c6; background: #fff; display: flex; flex: none; }
.gallery-grid { width: 122px; display: grid; grid-template-columns: repeat(6, 1fr); grid-template-rows: repeat(3, 1fr); }
.shape { width: 17px; height: 17px; margin: auto; }
.shape-text { font-size: 9px; fill: #555; }
.gallery-scroll { flex: 1; display: flex; flex-direction: column; border-left: 1px solid #c6c6c6; }
.gs-btn { flex: 1; display: flex; align-items: center; justify-content: center; border-bottom: 1px solid #c6c6c6; }
.gs-btn:last-child { border-bottom: 0; }
.gs-btn.off { background: #ddd; }
.tri { display: block; width: 0; height: 0; border-left: 4px solid transparent; border-right: 4px solid transparent; }
.tri.up { border-bottom: 4px solid #888; }
.tri.down { border-top: 4px solid #666; }
.tri-more { display: block; width: 8px; height: 6px; border-top: 1px solid #666; background: linear-gradient(#666, #666) no-repeat center 2px / 8px 1px; }
.arrange { width: 44px; margin-left: 1px; padding-top: 8px; }
.arrange .big-label { margin-top: 5px; }
.quick { width: 44px; margin-left: 5px; padding-top: 7px; }
.quick .big-label:first-of-type { margin-top: 3px; }
.shape-col { margin-left: 6px; }
.edit-col { margin-left: 9px; }

/* workspace */
.workspace { flex: 1; min-height: 0; display: flex; }
.thumbs { width: 379px; flex: none; position: relative; border-right: 1px solid #c6c6c6; box-sizing: border-box; overflow: hidden; }
.thumb-list { padding-top: 18px; }
.thumb-item { position: relative; margin-bottom: 18px; padding-left: 18px; height: 182px; }
.thumb-no { position: absolute; left: 4px; top: 1px; font-size: 17px; line-height: 18px; color: #444; }
.thumb-no.current { color: #c4502f; }
.thumb { position: relative; width: 321px; height: 182px; box-sizing: border-box; background: #fff; border: 1px solid #c6c6c6; overflow: hidden; font-size: 6px; line-height: 7.05px; color: #666; padding: 8px 3px 0 4px; }
.thumb p { margin: 0 0 7px; white-space: pre-line; }
.thumb.sel { border: 3px solid #f0714f; margin: -2px 0 0 -2px; width: 325px; height: 186px; padding: 0; }
.thumb.t2 { padding: 49px 3px 0 9px; font-size: 6.5px; line-height: 7.2px; }
.thumb.t2 p { margin-bottom: 7.5px; }
.thumb.t3 { font-size: 5.7px; line-height: 7.2px; }
.thumb.t3 p { margin-bottom: 7.2px; }
.thumb.t4 { font-size: 6.6px; padding-top: 7px; }
.thumb.t4 p { margin-bottom: 7.4px; }
.thumb.t5 { font-size: 5.85px; }
.mini-sheet { position: absolute; left: 0; top: 0; width: 1466px; transform: scale(.2187); transform-origin: 0 0; font-family: "Liberation Serif", serif; font-size: 12px; color: #555; }
.mini-text { position: absolute; left: 77px; top: 22px; white-space: nowrap; font-size: 6.4px; }
.mini-text p { margin: 0 0 6.5px; }

.scrollbar { position: absolute; top: 2px; width: 15px; display: flex; flex-direction: column; background: #dbdbdb; }
.left-scroll { left: 359px; bottom: 2px; }
.sb-btn { height: 15px; box-sizing: border-box; flex: none; background: #fff; border: 1px solid #ababab; display: flex; align-items: center; justify-content: center; }
.sb-thumb { flex: none; background: #fff; border: 1px solid #ababab; border-top: 2px solid #ababab; box-sizing: border-box; }
.left-scroll .sb-thumb { height: 275px; }
.main-scroll { left: 1517px; height: 806px; }
.main-scroll .sb-thumb { height: 60px; }
.sb-track { flex: 1; }

.editor { position: relative; flex: 1; min-width: 0; padding: 17px 0 0 25px; box-sizing: border-box; background: linear-gradient(#c6c6c6, #c6c6c6) no-repeat 0 864px / 100% 1px; }
.slide { position: relative; width: 1468px; height: 826px; box-sizing: border-box; background: #fff; border: 1px solid #c6c6c6; overflow: hidden; }
.page-arrow { position: absolute; left: 3px; }
.page-arrow.prev { top: 810px; }
.page-arrow.next { top: 827px; }

/* sheet inside the slide */
.sheet { font-family: "Liberation Serif", serif; font-size: 12px; color: #333; }
.sheet-head { display: flex; height: 13px; padding-top: 1px; }
.corner { width: 15px; background: #f0f0f0; flex: none; }
.col-head { width: 50px; flex: none; box-sizing: border-box; background: #eee; border-right: 1px solid #ddd; text-align: center; line-height: 13px; font-family: "Liberation Sans", sans-serif; color: #777; }
.sheet-row { display: flex; height: 16.37px; line-height: 16.37px; }
.sheet-row.firstrow { height: 12.5px; line-height: 12.5px; }
.row-head { width: 15px; flex: none; box-sizing: border-box; background: #f0f0f0; text-align: center; font-family: "Liberation Sans", sans-serif; font-size: 11px; color: #777; border-bottom: 1px solid #ddd; }
.cell { width: 50px; flex: none; box-sizing: border-box; text-align: right; padding: 0 2px 0 0; position: relative; top: -2px; }
.drawing { position: absolute; left: 0; top: 0; width: 1466px; height: 824px; }
.textbox { position: absolute; left: 341px; top: 56px; width: 994px; height: 147px; box-sizing: border-box; border: 1px dashed #888; padding: 35px 0 0 12px; color: #000; font-size: 29px; }
.tb-line { margin: 0; line-height: 36px; letter-spacing: .85px; white-space: nowrap; }
.tb-line.second { margin-top: 27px; letter-spacing: 1.05px; }
.typo { text-decoration: underline wavy #e8484c 1px; text-underline-offset: 4px; }
.text-cursor { display: inline-block; width: 1px; height: 32px; margin: 0 -.5px; background: #000; vertical-align: -6px; }
.handle { position: absolute; width: 7px; height: 7px; border: 2px solid #999; border-radius: 50%; background: #fff; }
.handle.tl, .handle.tc, .handle.tr { top: -6px; }
.handle.ml, .handle.mr { top: 66px; }
.handle.bl, .handle.bc, .handle.br { top: 139px; }
.handle.tl, .handle.ml, .handle.bl { left: -6px; }
.handle.tc, .handle.bc { left: 490px; }
.handle.tr, .handle.mr, .handle.br { left: 987px; }

/* status bar */
.statusbar { height: 22px; flex: none; background: #f1f1f1; border-top: 1px solid #c6c6c6; box-sizing: border-box; display: flex; align-items: center; font-size: 13px; color: #555; }
.st-count { margin-left: -2px; }
.st-book { margin-left: 21px; }
.st-lang { margin-left: 17px; }
.st-right { margin-left: auto; display: flex; align-items: center; height: 100%; }
.st-item { display: flex; align-items: center; gap: 4px; }
.st-item.memo { margin: 0 20px 0 22px; }
.view { width: 38px; height: 100%; display: flex; align-items: center; justify-content: center; }
.view.on { background: #c6c6c6; }
.zoom-minus { width: 6px; height: 2px; background: #555; margin-left: 4px; }
.zoom-track { position: relative; width: 100px; height: 1px; background: #999; margin-left: 4px; }
.zoom-knob { position: absolute; left: 53px; top: -6px; width: 4px; height: 13px; background: #666; }
.zoom-plus { margin-left: 5px; font-size: 17px; font-weight: 700; line-height: 1; color: #555; }
.zoom-val { margin-left: 13px; }
.fit { margin: 0 6px 0 14px; }
</style>
